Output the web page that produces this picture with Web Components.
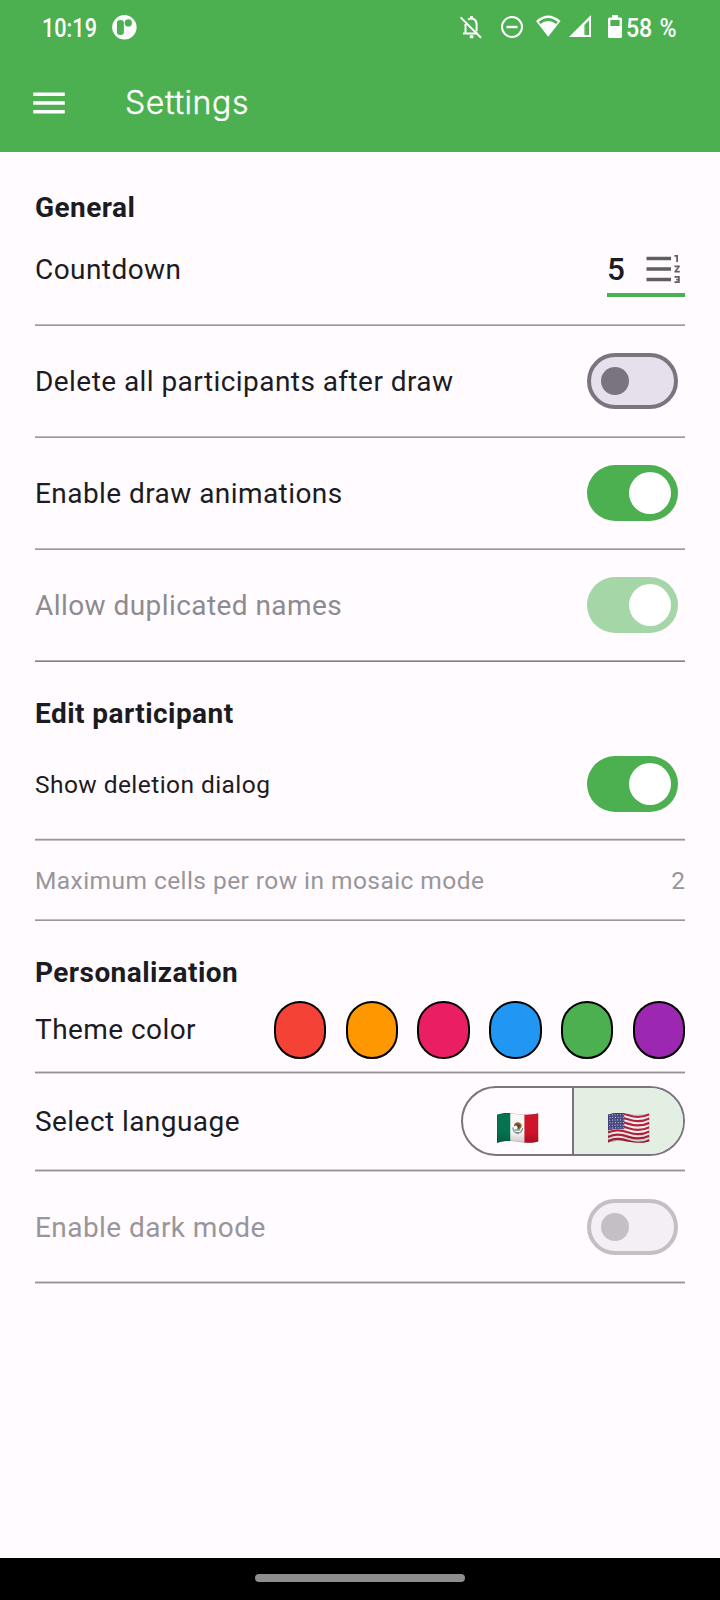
<!DOCTYPE html>
<html lang="en">
<head>
<meta charset="utf-8">
<title>Settings</title>
<style>
html,body{margin:0;height:100%}
body{font-family:Roboto,"Liberation Sans",sans-serif;background:#fffbff;color:#1c1b1f}
</style>
</head>
<body>
<settings-app></settings-app>
<script>
const define=(name,html,setup)=>{
  const t=document.createElement('template');
  t.innerHTML=html;
  customElements.define(name,class extends HTMLElement{
    constructor(){
      super();
      this.attachShadow({mode:'open'}).append(t.content.cloneNode(true));
    }
    connectedCallback(){ if(setup) setup(this,this.shadowRoot); }
  });
};

define('status-bar',`
<style>
:host{display:flex;height:54px;box-sizing:border-box;padding:0 0 0 42px;color:#fff;align-items:flex-start}
svg{display:block;flex:none}
.t{flex:none;font-size:25.2px;line-height:30px;margin-top:14px;white-space:pre;transform-origin:0 50%;font-weight:500}
.time{width:70px;transform:scaleX(.86)}
.pct{width:60px;transform:scaleX(.92);margin-left:4px;word-spacing:2px;letter-spacing:-.2px}
.sp{flex:1}
.right{display:flex;margin-right:34px}
</style>
<span class="t time">10:19</span>
<svg width="26" height="26" viewBox="0 0 26 26" style="margin-top:14px"><circle cx="12.4" cy="13.3" r="12.2" fill="#fff"/><rect x="4.9" y="6" width="7" height="15" rx="3.2" fill="#4caf50"/><circle cx="16.3" cy="8.9" r="3.6" fill="#4caf50"/></svg>
<span class="sp"></span>
<div class="right">
<svg width="24" height="26" viewBox="0 0 24 26" style="margin-top:14px;margin-right:17px" fill="none" stroke="#fff" stroke-width="2"><path d="M1.6 3.4 22 23.8M6.500 10v9.500M4 19.600h15M9 5.700c5-2.800 8.600.3 8.600 4.600v7"/><path d="M12.500 2.300v3M10.800 22.700h3.600" stroke-width="3"/></svg>
<svg width="24" height="26" viewBox="0 0 24 26" style="margin-top:14px;margin-right:11px" fill="none" stroke="#fff" stroke-width="2"><circle cx="12" cy="13" r="10"/><path d="M6.500 13h11" stroke-width="2.400"/></svg>
<svg width="27" height="24" viewBox="0 0 27 24" style="margin-top:14px;margin-right:7px"><path d="M1 7Q13.200-4 25.500 7L13.200 22.700Z" fill="#fff"/><path d="M3.700 8Q13.200.2 22.800 8L21.300 10Q13.200 3.800 5.200 10Z" fill="#4caf50"/></svg>
<svg width="23" height="24" viewBox="0 0 23 24" style="margin-top:14px;margin-right:16px"><path d="M0 23 22 1V23Z" fill="#fff"/><path d="M15.200 11 20.200 6V21H15.200Z" fill="#4caf50" opacity=".75"/><path d="M16.500 10.500 20 7V21H16.500Z" fill="#4caf50"/></svg>
<svg width="14" height="24" viewBox="0 0 14 24" style="margin-top:14px"><path d="M4 1h6v2.500H12.500Q14 3.500 14 5V22.500Q14 24 12.500 24H1.500Q0 24 0 22.500V5Q0 3.500 1.500 3.500H4Z" fill="#fff"/><path d="M2.400 6h9.200v6H2.400Z" fill="#4caf50"/></svg>
<span class="t pct">58 %</span>
</div>`);

define('app-bar',`
<style>
:host{display:block;background:#4caf50;height:152px;flex:none;color:#fff}
.bar{display:flex;align-items:center;height:98px;padding-left:28px}
svg{display:block;flex:none}
h1{margin:0 0 0 55px;font:300 32px/40px Inter,sans-serif;letter-spacing:.6px;-webkit-text-stroke:.4px #fff}
</style>
<status-bar></status-bar>
<div class="bar">
<svg width="42" height="42" viewBox="0 0 24 24" fill="#fff"><path d="M3 18h18v-2H3zm0-5h18v-2H3zm0-7v2h18V6z"/></svg>
<h1><slot></slot></h1>
</div>`);

define('section-title',`
<style>
:host{display:block;padding-top:35px;font-size:28px;line-height:32px;margin-bottom:-1px;font-weight:700;letter-spacing:.4375px}
</style><slot></slot>`);

define('setting-row',`
<style>
:host{display:block}
.row{display:flex;align-items:center;justify-content:space-between;height:var(--h,109px);box-sizing:border-box}
.label{font-size:28px;letter-spacing:.4375px;line-height:33px;white-space:nowrap;padding-top:var(--nudge,0)}
:host([small]) .row ::slotted(span),:host([small]) .label{font-size:24.500px}
:host([muted]){color:#98969a}
:host([top]) .row{align-items:flex-start;padding-top:25px}
:host([top]) .label{line-height:43px}
.line{height:3px;background:linear-gradient(var(--a,#bdbabd) 0 1px,var(--b,#99979a) 1px 2px,var(--c,transparent) 2px 3px)}
</style>
<div class="row"><span class="label"></span><slot></slot></div><div class="line"></div>`,
(h,r)=>{r.querySelector('.label').textContent=h.getAttribute('label')});

define('md-switch',`
<style>
:host{display:flex;align-items:center;box-sizing:border-box;width:91px;height:56px;border-radius:28px;margin:0 7px var(--lift,1px) 0;border:4px solid #79747e;background:#e6e0ec;padding-left:10px}
i{display:block;width:28px;height:28px;border-radius:50%;background:#79747e}
:host([on]){border:0;background:#4caf50;padding-left:42px}
:host([on]) i{width:42px;height:42px;background:#fff}
:host([on][disabled]){background:#a5d6a7}
:host([disabled]:not([on])){border-color:#c3bfc4;background:#f3eff5}
:host([disabled]:not([on])) i{background:#c3bfc4}
</style><i></i>`);

define('countdown-field',`
<style>
:host{display:flex;align-items:center;justify-content:space-between;box-sizing:border-box;width:78px;height:49px;padding-bottom:3px;border-bottom:4px solid #4caf50}
.v{font-size:31.500px;line-height:42px;font-weight:500;padding-top:2px}
svg{display:block}
</style><span class="v"><slot></slot></span>
<svg width="42" height="42" viewBox="0 0 24 24" fill="#605e62"><path d="M18 17h2v.5h-1v1h1v.5h-2v1h3v-4h-3zm1-9h1V4h-2v1h1zm-1 3h1.800L18 13.100v.9h3v-1h-1.800l1.800-2.100V10h-3zM2 5h14v2H2zm0 12h14v2H2zm0-6h14v2H2z"/></svg>`);

define('color-swatches',`
<style>
:host{display:flex;gap:19.250px}
i{display:block;box-sizing:border-box;width:52.500px;height:58px;border:2px solid #000;border-radius:26.250px}
</style>`,
(h,r)=>{for(const c of h.getAttribute('colors').split(' ')){const i=document.createElement('i');i.style.background=c;r.append(i)}});

const wave=(y)=>`M0 ${y}C7 ${y-3} 12 ${y-3} 20.700 ${y}S35 ${y+2} 41.400 ${y-1}`;
const stripes=Array.from({length:7},(_,i)=>`<path d="${wave(2.200+i*4.330)}" fill="none" stroke="#b32339" stroke-width="2.250"/>`).join('');
const stars=Array.from({length:6},(_,y)=>Array.from({length:6},(_,x)=>`<circle cx="${1.600+x*2.700+(y%2)*.5}" cy="${2.200+y*2.600-Math.sin((x+1)/3)*.5}" r=".55" fill="#d5d4e8"/>`).join('')).join('');
const shape='M0 1.800C6-.7 13-.2 20.700 1S35 2 41.400.3V28.600C35 30.500 28 30 20.700 28.800S6 27.700 0 30Z';
define('country-flag',`
<style>:host{display:block;width:42px;height:31px}svg{display:block}</style>
<svg width="42" height="31" viewBox="0 0 42 31"></svg>`,
(h,r)=>{
  const body=h.getAttribute('code')==='mx'
  ?`<rect width="13.500" height="31" fill="#04734f"/><rect x="13.500" width="14" height="31" fill="#f8f8f6"/><rect x="27.400" width="14" height="31" fill="#d0142b"/>
    <path d="M15.800 14.500c.5 4.500 2.300 5.500 4.900 5.500s4.600-1.400 4.900-5" fill="none" stroke="#70a18c" stroke-width="1.300"/><path d="M17 12c.8-2.400 3-3.200 5-2.500 2 .6 3.300 2.500 2.500 4.500l-2 2.500-2.800.3 1-2.300-1.700-2-2 .7Z" fill="#8b6235"/><path d="M19.400 11.500l3 1-1 2.500" stroke="#49361f" stroke-width="1" fill="none"/><path d="M17.500 17h5.800" stroke="#63b0b5" stroke-width="1.300"/><path d="M19.500 20h2.500" stroke="#b55840" stroke-width="1.200"/>`
  :`<rect width="42" height="31" fill="#f5f2f4"/>${stripes}<path d="M0 0H16.300V16.300Q8 15.500 0 17.500Z" fill="#474882"/>${stars}`;
  r.querySelector('svg').innerHTML=`<defs><clipPath id="c"><path d="${shape}"/></clipPath><linearGradient id="g" x2="0" y2="1"><stop stop-opacity="0"/><stop offset=".6" stop-opacity="0"/><stop offset="1" stop-opacity=".2"/></linearGradient></defs><g clip-path="url(#c)">${body}<rect width="42" height="31" fill="url(#g)"/><path d="${shape}" fill="none" stroke="#000" stroke-opacity=".22" stroke-width="1"/></g>`;
});

define('language-toggle',`
<style>
:host{display:grid;grid-template-columns:109px 1fr;box-sizing:border-box;width:224px;height:70px;border:2px solid #79747e;border-radius:35px;overflow:hidden;margin-bottom:1px}
div{display:flex;justify-content:center;padding:25px 0 0 0}
div+div{border-left:2px solid #79747e;background:#e4efe3;padding-left:1px}
</style>
<div><country-flag code="mx"></country-flag></div><div><country-flag code="us"></country-flag></div>`);

define('gesture-bar',`
<style>:host{display:flex;flex:none;height:42px;background:#000;align-items:center;justify-content:center}
i{display:block;width:210px;height:8px;border-radius:4px;background:#8e8e8e;margin-top:-2px}</style><i></i>`);

define('settings-app',`
<style>
:host{display:flex;flex-direction:column;width:720px;height:1600px;background:#fffbff}
main{flex:1;padding:0 35px}
.soft{--a:#d2cfd2;--b:#959396;--c:#d2cfd2}
</style>
<app-bar>Settings</app-bar>
<main>
<section-title style="padding-top:40px">General</section-title>
<setting-row top label="Countdown" style="--h:101px"><countdown-field>5</countdown-field></setting-row>
<setting-row label="Delete all participants after draw"><md-switch></md-switch></setting-row>
<setting-row label="Enable draw animations"><md-switch on></md-switch></setting-row>
<setting-row muted label="Allow duplicated names" style="color:#8d8b8f;--a:#b0adb0;--b:#838184"><md-switch on disabled></md-switch></setting-row>
<section-title style="padding-bottom:1px">Edit participant</section-title>
<setting-row small label="Show deletion dialog" style="--h:108px;--lift:0px;--a:#e6e3e6;--b:#99979a;--c:#c3c0c3"><md-switch on></md-switch></setting-row>
<setting-row small muted label="Maximum cells per row in mosaic mode" style="--h:78px"><span>2</span></setting-row>
<section-title>Personalization</section-title>
<setting-row class="soft" label="Theme color" style="--h:83px"><color-swatches colors="#f44336 #ff9800 #e91e63 #2196f3 #4caf50 #9c27b0"></color-swatches></setting-row>
<setting-row class="soft" label="Select language" style="--h:95px"><language-toggle></language-toggle></setting-row>
<setting-row class="soft" muted label="Enable dark mode" style="--nudge:2px;--lift:0px"><md-switch disabled></md-switch></setting-row>
</main>
<gesture-bar></gesture-bar>`);
</script>
</body>
</html>
